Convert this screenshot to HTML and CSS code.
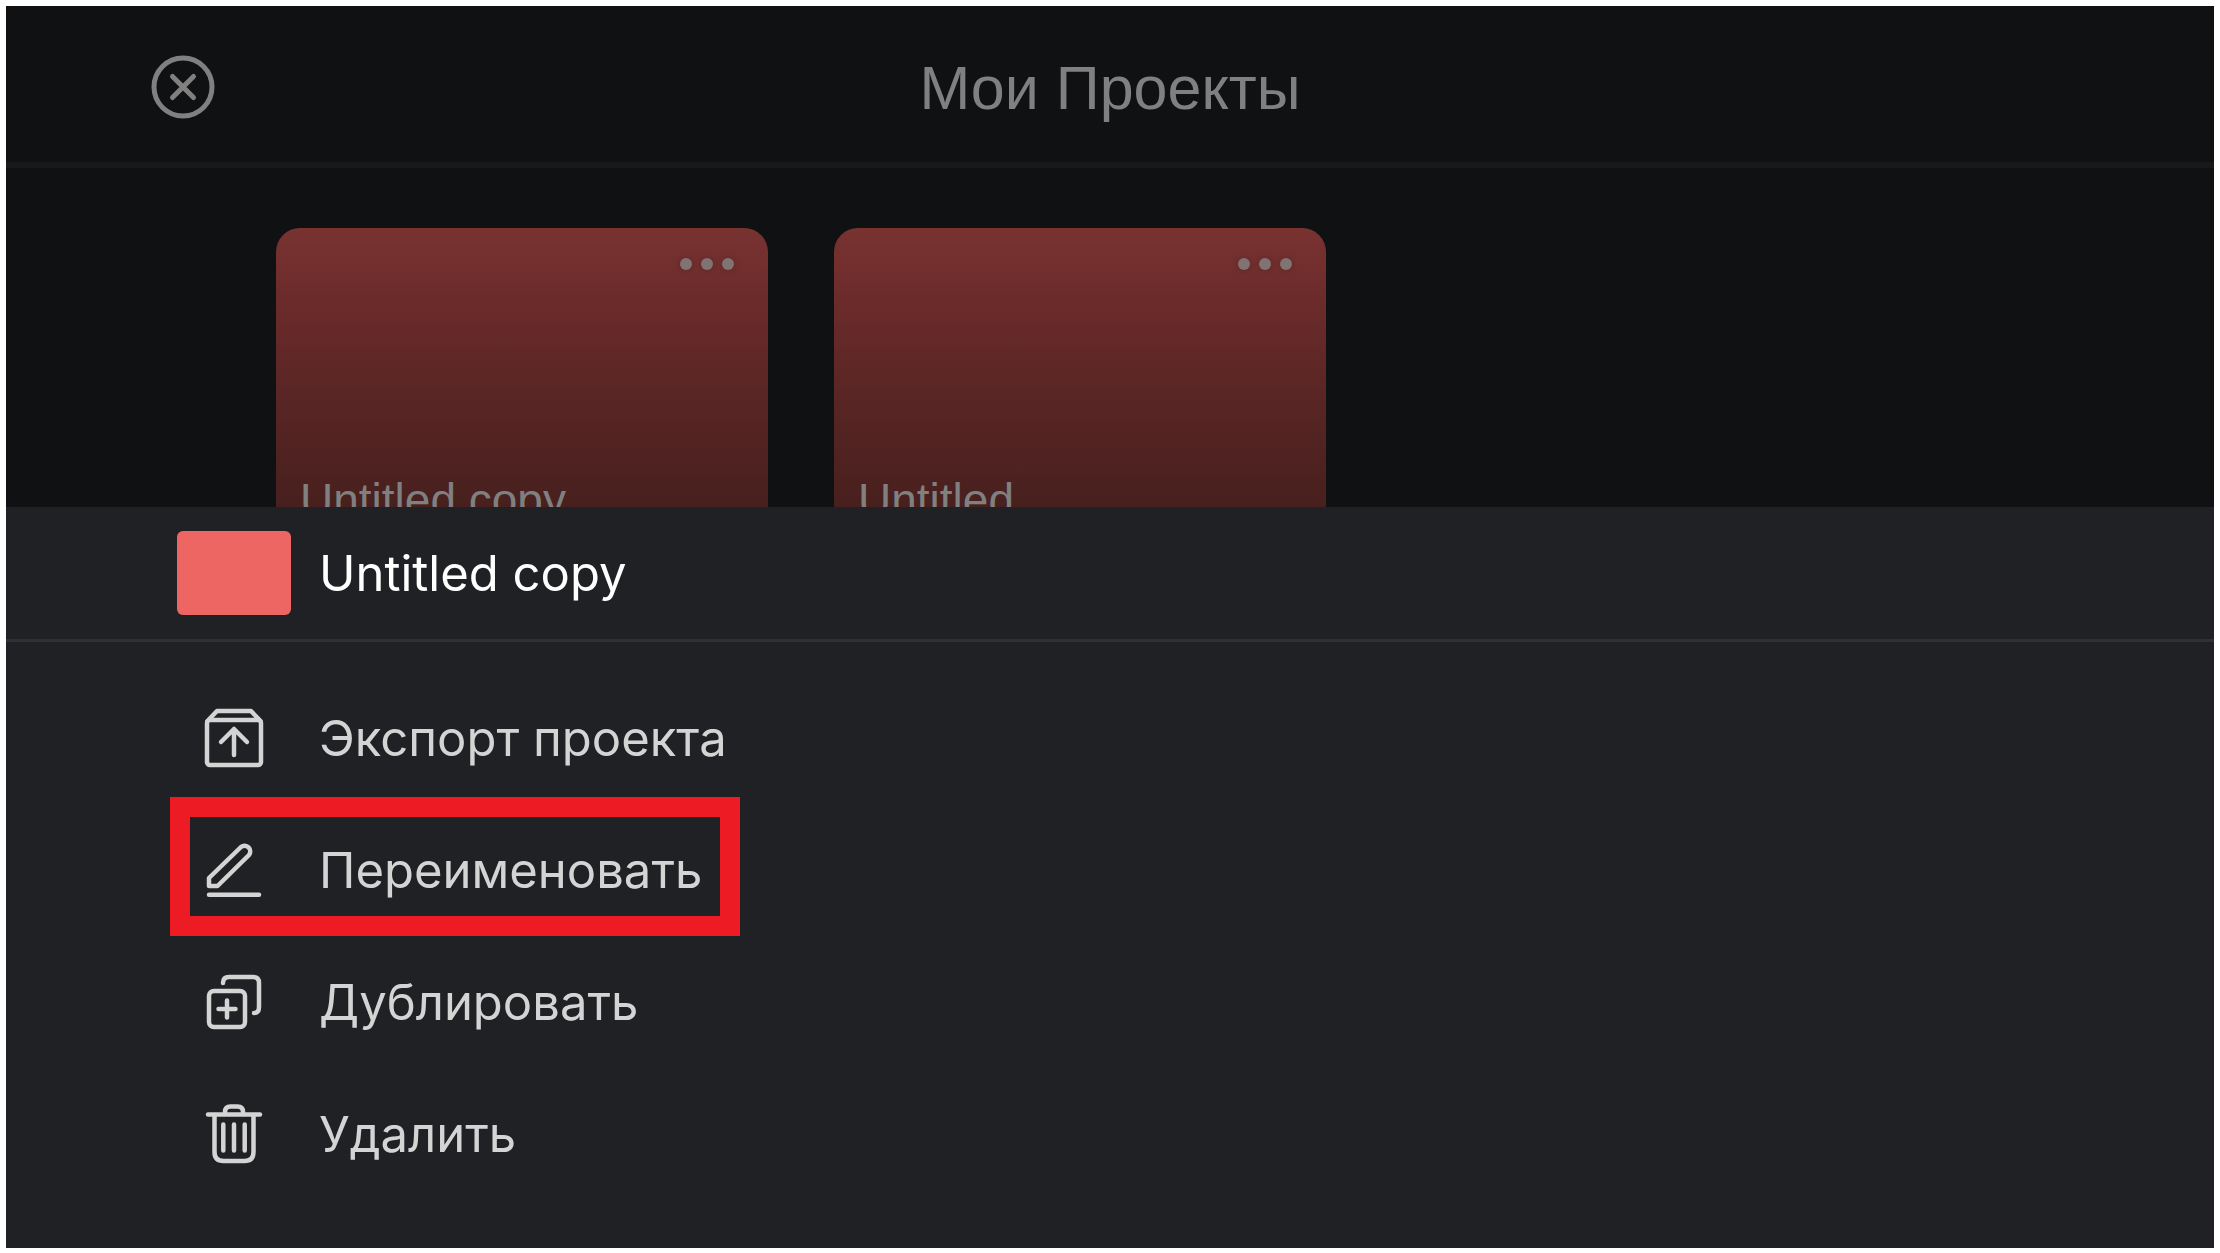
FILE: index.html
```
<!DOCTYPE html>
<html lang="ru">
<head>
    <meta charset="UTF-8">
    <meta name="viewport" content="width=device-width, initial-scale=1">
    <title>Мои Проекты</title>
    <link rel="stylesheet" href="styles.css">
</head>
<body>
    <main class="projects">
        <header class="topbar">
            <button type="button" class="close-button" aria-label="Закрыть">
                <svg class="close-icon" viewBox="0 0 64 64">
                    <circle cx="32" cy="32" r="29"/>
                    <path d="M21.5 21.5l21 21M42.5 21.5l-21 21"/>
                </svg>
            </button>
            <h1>Мои Проекты</h1>
        </header>

        <div class="project-grid">
            <article class="card">
                <button type="button" class="more-button" aria-label="Ещё">
                    <span class="dot"></span><span class="dot"></span><span class="dot"></span>
                </button>
                <span class="card-name">Untitled copy</span>
            </article>
            <article class="card">
                <button type="button" class="more-button" aria-label="Ещё">
                    <span class="dot"></span><span class="dot"></span><span class="dot"></span>
                </button>
                <span class="card-name">Untitled</span>
            </article>
        </div>
    </main>

    <!-- Меню проекта -->
    <section class="sheet">
        <div class="sheet-header">
            <div class="thumb"></div>
            <h2 class="label">Untitled copy</h2>
        </div>

        <div class="menu">
            <button type="button" class="menu-item">
                <span class="icon-box">
                    <svg class="icon" viewBox="0 0 60 60">
                        <rect x="3" y="12" width="54" height="45" rx="3"/>
                        <path d="M3.500 13L13 3H47L56.500 13"/>
                        <path d="M30 47V21M17 34L30 21L43 34"/>
                    </svg>
                </span>
                <span class="label">Экспорт проекта</span>
            </button>
            <button type="button" class="menu-item selected">
                <span class="icon-box">
                    <svg class="icon" viewBox="0 0 60 60">
                        <path d="M5 46V38L37 7A5.700 5.700 0 0 1 45 15L13.500 46Z"/>
                        <path d="M5 54.700H55"/>
                    </svg>
                </span>
                <span class="label">Переименовать</span>
            </button>
            <button type="button" class="menu-item">
                <span class="icon-box">
                    <svg class="icon" viewBox="0 0 60 60">
                        <rect x="5" y="19" width="36" height="36" rx="5"/>
                        <path d="M23 28.500V45.500M14.500 37H31.500"/>
                        <path d="M19 11Q19 5 25 5H49Q55 5 55 11V35Q55 41 50 41"/>
                    </svg>
                </span>
                <span class="label">Дублировать</span>
            </button>
            <button type="button" class="menu-item">
                <span class="icon-box">
                    <svg class="icon" viewBox="0 0 60 60">
                        <path d="M4 10.500H56"/>
                        <path d="M21 10V8Q21 2.500 26.500 2.500H33.500Q39 2.500 39 8V10"/>
                        <path d="M10.500 11V48Q10.500 57 19.500 57H40.500Q49.500 57 49.500 48V11"/>
                        <path d="M19.300 20.500V46.500M30 20.500V46.500M40.700 20.500V46.500"/>
                    </svg>
                </span>
                <span class="label">Удалить</span>
            </button>
        </div>
    </section>
</body>
</html>
```
FILE: styles.css
```
* {
    box-sizing: border-box;
}

body {
    display: flex;
    flex-direction: column;
    height: 100vh;
    margin: 0;
    padding: 6px 6px 5px;
    background-color: #fff;
    font-family: Inter, Roboto, sans-serif;
}

h1, h2 {
    margin: 0;
    font-weight: 400;
}

button {
    padding: 0;
    border: none;
    background: none;
    color: inherit;
    font: inherit;
    cursor: pointer;
}

svg {
    display: block;
    fill: none;
    stroke: currentColor;
    stroke-linecap: round;
    stroke-linejoin: round;
}

/* Список проектов */
.projects {
    flex: 1;
    min-height: 0;
    overflow: hidden;
    background-color: #0f1112;
    color: #808080;
    font-family: "Liberation Sans", Arial, sans-serif;
}

.topbar {
    display: grid;
    grid-template-columns: 1fr auto 1fr;
    align-items: center;
    height: 162px;
    padding: 6px 145px 0;
    border-bottom: 6px solid #17191b;
}

.topbar h1 {
    padding-top: 2px;
    font-size: 61px;
    line-height: 72px;
}

.close-button {
    justify-self: start;
}

.close-icon {
    width: 64px;
    height: 64px;
    stroke-width: 5px;
}

.project-grid {
    display: grid;
    grid-template-columns: repeat(auto-fill, 492px);
    gap: 66px;
    padding: 60px 270px;
}

.card {
    display: flex;
    flex-direction: column;
    justify-content: space-between;
    height: 350px;
    padding: 30px 34px 52px 24px;
    border-radius: 24px;
    background: linear-gradient(#783331, #6c2b2b 70px, #572524 180px, #47201e 280px);
}

.more-button {
    display: flex;
    align-self: flex-end;
    gap: 9px;
}

.dot {
    width: 12px;
    height: 12px;
    border-radius: 50%;
    background-color: #807372;
    box-shadow: 0 0 6px rgba(0, 0, 0, 0.2);
}

.card-name {
    font-size: 46px;
    line-height: 52px;
}

/* Нижняя панель */
.sheet {
    background-color: #202124;
    color: #d4d4d4;
}

.sheet-header {
    display: flex;
    align-items: center;
    gap: 28px;
    padding: 24px 171px;
    border-bottom: 3px solid #303136;
    color: #fff;
}

.label {
    padding-top: 2px;
    font-size: 49px;
    line-height: 60px;
}

.thumb {
    width: 114px;
    height: 84px;
    border-radius: 6px;
    background-color: #ed6663;
}

.menu {
    display: flex;
    flex-direction: column;
    align-items: flex-start;
    padding: 30px 171px 48px;
}

.menu-item {
    position: relative;
    display: flex;
    align-items: center;
    gap: 28px;
    height: 132px;
}

.icon-box {
    display: flex;
    justify-content: center;
    width: 114px;
}

.icon {
    width: 60px;
    height: 60px;
    stroke-width: 4.5px;
}

.menu-item.selected::after {
    content: "";
    position: absolute;
    top: -7px;
    right: -38px;
    bottom: 0;
    left: -7px;
    border: 20px solid #ed1c24;
}
```
